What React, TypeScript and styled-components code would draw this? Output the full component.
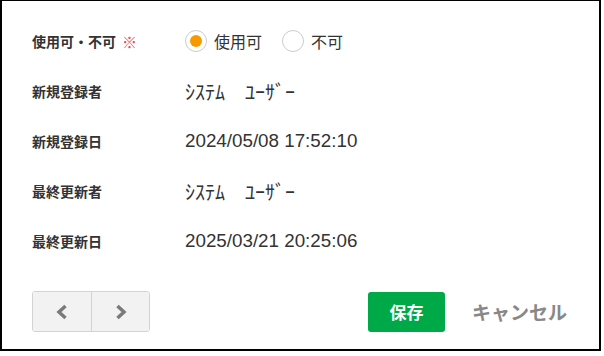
import React, { useState } from "react";
import styled, { createGlobalStyle } from "styled-components";

const Global = createGlobalStyle`
  html, body { margin: 0; padding: 0; background: #fff; }
  body { font-family: "Noto Sans CJK JP", "Noto Sans", sans-serif; color: #333; }
`;

const Panel = styled.div`
  box-sizing: border-box;
  width: 601px;
  height: 351px;
  border: 2px solid #000;
  border-top-width: 1px;
  padding: 15px 32px 0 30px;
  display: flex;
  flex-direction: column;
`;

const Row = styled.div`
  display: grid;
  grid-template-columns: 153px 1fr;
  align-items: center;
  height: 50px;
`;

const Label = styled.div`
  font-size: 14px;
  font-weight: 700;
  color: #333;
  display: flex;
  align-items: center;
  gap: 6px;
`;

const Required = styled.span`
  color: #e84a68;
  font-size: 15px;
  font-weight: 400;
`;

const Value = styled.div<{ $kana?: boolean }>`
  font-family: ${(p) =>
    p.$kana
      ? '"Noto Sans CJK JP", sans-serif'
      : '"Liberation Sans", Arial, sans-serif'};
  font-size: ${(p) => (p.$kana ? "20px" : "18.8px")};
  color: #333;
  white-space: pre;
`;

const RadioGroup = styled.div`
  display: flex;
  align-items: center;
  gap: 20px;
`;

const RadioLabel = styled.label`
  display: flex;
  align-items: center;
  gap: 7px;
  font-size: 16px;
  color: #333;
  cursor: pointer;
`;

const Circle = styled.span<{ $on: boolean }>`
  box-sizing: border-box;
  width: 22px;
  height: 22px;
  border-radius: 50%;
  border: 1px solid #ccc;
  background: #fff;
  display: flex;
  align-items: center;
  justify-content: center;
  &::after {
    content: "";
    width: 12px;
    height: 12px;
    border-radius: 50%;
    background: ${(p) => (p.$on ? "#f79a00" : "transparent")};
  }
`;

const Footer = styled.div`
  margin-top: 25px;
  display: flex;
  align-items: center;
  justify-content: space-between;
`;

const NavGroup = styled.div`
  display: flex;
  border: 1px solid #d3d3d3;
  border-radius: 3px;
  overflow: hidden;
  height: 39px;
`;

const NavButton = styled.button`
  width: 58px;
  height: 100%;
  border: none;
  background: #f2f2f2;
  display: flex;
  align-items: center;
  justify-content: center;
  padding: 0;
  cursor: pointer;
  & + & { border-left: 1px solid #d3d3d3; }
`;

const Actions = styled.div`
  display: flex;
  align-items: center;
  gap: 27px;
`;

const SaveButton = styled.button`
  width: 77px;
  height: 40px;
  border: none;
  border-radius: 3px;
  background: #00a948;
  color: #fff;
  font-family: "Noto Sans CJK JP", sans-serif;
  font-size: 17px;
  font-weight: 700;
  cursor: pointer;
`;

const CancelButton = styled.button`
  border: none;
  background: none;
  padding: 0;
  color: #888;
  font-family: "Noto Sans CJK JP", sans-serif;
  font-size: 19px;
  font-weight: 700;
  cursor: pointer;
`;

const Chevron = ({ dir }: { dir: "left" | "right" }) => (
  <svg width="14" height="16" viewBox="0 0 14 16">
    <path
      d={dir === "left" ? "M10.5 2 L4 8 L10.5 14" : "M3.5 2 L10 8 L3.5 14"}
      fill="none"
      stroke="#7a7a7a"
      strokeWidth="3.5"
      strokeLinejoin="miter"
    />
  </svg>
);

export default function App() {
  const [usable, setUsable] = useState(true);
  return (
    <>
      <Global />
      <Panel>
        <Row>
          <Label>
            使用可・不可<Required>※</Required>
          </Label>
          <RadioGroup>
            <RadioLabel onClick={() => setUsable(true)}>
              <Circle $on={usable} />
              使用可
            </RadioLabel>
            <RadioLabel onClick={() => setUsable(false)}>
              <Circle $on={!usable} />
              不可
            </RadioLabel>
          </RadioGroup>
        </Row>
        <Row>
          <Label>新規登録者</Label>
          <Value $kana>{"ｼｽﾃﾑ　ﾕｰｻﾞｰ"}</Value>
        </Row>
        <Row>
          <Label>新規登録日</Label>
          <Value>2024/05/08 17:52:10</Value>
        </Row>
        <Row>
          <Label>最終更新者</Label>
          <Value $kana>{"ｼｽﾃﾑ　ﾕｰｻﾞｰ"}</Value>
        </Row>
        <Row>
          <Label>最終更新日</Label>
          <Value>2025/03/21 20:25:06</Value>
        </Row>
        <Footer>
          <NavGroup>
            <NavButton>
              <Chevron dir="left" />
            </NavButton>
            <NavButton>
              <Chevron dir="right" />
            </NavButton>
          </NavGroup>
          <Actions>
            <SaveButton>保存</SaveButton>
            <CancelButton>キャンセル</CancelButton>
          </Actions>
        </Footer>
      </Panel>
    </>
  );
}
